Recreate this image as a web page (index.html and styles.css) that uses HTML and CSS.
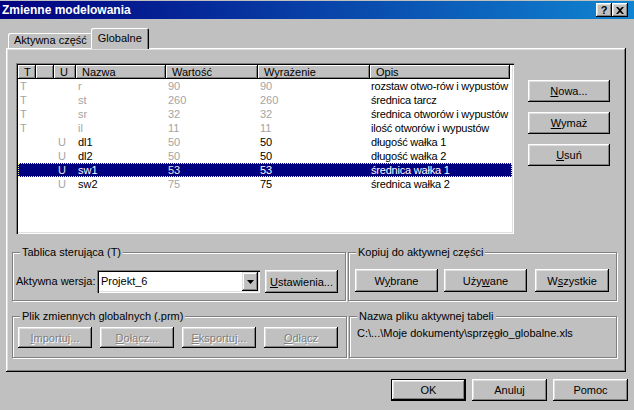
FILE: index.html
```html
<!DOCTYPE html>
<html lang="pl">
<head>
<meta charset="utf-8">
<title>Zmienne modelowania</title>
<link rel="stylesheet" href="styles.css">
</head>
<body>
<div class="window">
  <div class="titlebar">
    <span class="title">Zmienne modelowania</span>
    <div class="tb-buttons">
      <span class="tb-btn tb-help">?</span>
      <span class="tb-btn"><svg width="8" height="7" viewBox="0 0 8 7"><path d="M0 0h2l2 2 2-2h2L5 3.5 8 7H6L4 5 2 7H0l3-3.5z" fill="#000"/></svg></span>
    </div>
  </div>

  <div class="tabs">
    <div class="tab">Aktywna część</div>
    <div class="tab active">Globalne</div>
  </div>

  <div class="panel">
    <div class="top-row">
      <div class="list">
        <div class="list-head">
          <span class="hcell">T</span>
          <span class="hcell"></span>
          <span class="hcell">U</span>
          <span class="hcell">Nazwa</span>
          <span class="hcell">Wartość</span>
          <span class="hcell">Wyrażenie</span>
          <span class="hcell">Opis</span>
        </div>
        <div class="row"><span class="g">T</span><span></span><span class="u"></span><span class="g">r</span><span class="g">90</span><span class="g">90</span><span class="desc">rozstaw otwo-rów i wypustów</span></div>
        <div class="row"><span class="g">T</span><span></span><span class="u"></span><span class="g">st</span><span class="g">260</span><span class="g">260</span><span class="desc">średnica tarcz</span></div>
        <div class="row"><span class="g">T</span><span></span><span class="u"></span><span class="g">sr</span><span class="g">32</span><span class="g">32</span><span class="desc">średnica otworów i wypustów</span></div>
        <div class="row"><span class="g">T</span><span></span><span class="u"></span><span class="g">il</span><span class="g">11</span><span class="g">11</span><span class="desc">ilość otworów i wypustów</span></div>
        <div class="row"><span></span><span></span><span class="u g">U</span><span>dl1</span><span class="g">50</span><span>50</span><span class="desc">długość wałka 1</span></div>
        <div class="row"><span></span><span></span><span class="u g">U</span><span>dl2</span><span class="g">50</span><span>50</span><span class="desc">długość wałka 2</span></div>
        <div class="row sel"><span></span><span></span><span class="u g">U</span><span>sw1</span><span class="g">53</span><span>53</span><span class="desc">średnica wałka 1</span></div>
        <div class="row"><span></span><span></span><span class="u g">U</span><span>sw2</span><span class="g">75</span><span>75</span><span class="desc">średnica wałka 2</span></div>
      </div>
      <div class="side-buttons">
        <button class="btn side"><u>N</u>owa...</button>
        <button class="btn side"><u>W</u>ymaż</button>
        <button class="btn side"><u>U</u>suń</button>
      </div>
    </div>

    <div class="group-row first">
      <div class="group g1">
        <span class="legend">Tablica sterująca (T)</span>
        <span class="label">Aktywna wersja:</span>
        <div class="combo">
          <span class="combo-text">Projekt_6</span>
          <span class="dd"><svg width="7" height="4" viewBox="0 0 7 4"><path d="M0 0h7L3.5 4z" fill="#000"/></svg></span>
        </div>
        <button class="btn settings"><u>U</u>stawienia...</button>
      </div>
      <div class="group g2">
        <span class="legend">Kopiuj do aktywnej części</span>
        <button class="btn copy">W<u>y</u>brane</button>
        <button class="btn copy">Uży<u>w</u>ane</button>
        <button class="btn copy narrow">W<u>s</u>zystkie</button>
      </div>
    </div>

    <div class="group-row second">
      <div class="group g3">
        <span class="legend">Plik zmiennych globalnych (.prm)</span>
        <button class="btn file" disabled><u>I</u>mportuj...</button>
        <button class="btn file" disabled><u>D</u>ołącz...</button>
        <button class="btn file" disabled><u>E</u>ksportuj...</button>
        <button class="btn file" disabled><u>O</u>dłącz</button>
      </div>
      <div class="group g4">
        <span class="legend">Nazwa pliku aktywnej tabeli</span>
        <span class="path">C:\...\Moje dokumenty\sprzęgło_globalne.xls</span>
      </div>
    </div>
  </div>

  <div class="footer">
    <button class="btn dlg default">OK</button>
    <button class="btn dlg">Anuluj</button>
    <button class="btn dlg">Pomoc</button>
  </div>
</div>
</body>
</html>
```

FILE: styles.css
```css
* { box-sizing: border-box; }

body {
  margin: 0;
  width: 634px;
  height: 410px;
  overflow: hidden;
  background: #c0c0c0;
  font-family: "Liberation Sans", Arial, sans-serif;
  font-size: 11px;
  color: #000;
}

.window { width: 634px; }

/* title bar */
.titlebar {
  margin-top: 1px;
  height: 18px;
  background: linear-gradient(to right, #000080, #1084d0);
  display: flex;
  align-items: center;
  justify-content: space-between;
  padding: 0 6px 0 2px;
}
.title {
  color: #fff;
  font-weight: bold;
  font-size: 12px;
  line-height: 14px;
}
.tb-buttons { display: flex; }
.tb-btn {
  width: 16px;
  height: 14px;
  background: #c0c0c0;
  box-shadow: inset -1px -1px #000, inset 1px 1px #fff, inset -2px -2px #808080, inset 2px 2px #dfdfdf;
  display: flex;
  align-items: center;
  justify-content: center;
}
.tb-help {
  font-weight: bold;
  font-size: 11px;
  line-height: 12px;
}

/* tabs */
.tabs {
  margin: 9px 0 0 8px;
  height: 20px;
  display: flex;
  align-items: flex-end;
}
.tab {
  height: 15px;
  padding: 0 6px;
  line-height: 15px;
  background: #c0c0c0;
  border-radius: 2px 2px 0 0;
  box-shadow: inset 1px 1px #fff, inset -1px 0 #000, inset -2px 0 #808080;
  white-space: nowrap;
}
.tab.active {
  position: relative;
  z-index: 1;
  height: 21px;
  line-height: 20px;
  margin: 0 -2px -1px -2px;
  padding: 0 7px 0 7px;
}

/* panel */
.panel {
  margin-left: 6px;
  width: 620px;
  height: 324px;
  padding: 15px 0 0 6px;
  box-shadow: inset -1px -1px #000, inset 1px 1px #fff, inset -2px -2px #808080, inset 2px 2px #dfdfdf;
}

.top-row {
  display: flex;
  align-items: flex-start;
}

/* list view */
.list {
  margin-left: 4px;
  width: 498px;
  height: 171px;
  padding: 2px;
  background: #fff;
  box-shadow: inset 1px 1px #808080, inset 2px 2px #000, inset -1px -1px #fff, inset -2px -2px #dfdfdf;
}
.list-head,
.row {
  display: grid;
  grid-template-columns: 18px 18px 22px 90px 92px 112px 142px;
}
.list-head {
  height: 14px;
  grid-template-columns: 18px 18px 22px 90px 92px 112px 140px;
}
.hcell {
  background: #c0c0c0;
  box-shadow: inset -1px -1px #000, inset 1px 1px #fff, inset -2px -2px #808080;
  padding-left: 6px;
  line-height: 14px;
  white-space: nowrap;
  overflow: hidden;
}
.row {
  height: 14px;
  line-height: 14px;
}
.row > span {
  padding-left: 2px;
  white-space: nowrap;
  overflow: hidden;
}
.row > span.u { padding-left: 4px; }
.row > span.desc {
  padding-left: 1px;
  letter-spacing: -0.2px;
  overflow: visible;
}
.g { color: #a4a4a4; }
.row.sel {
  background: #000080;
  color: #fff;
  outline: 1px dotted #ffff80;
  outline-offset: -1px;
}
.row.sel .g { color: #e8e8e8; }

/* buttons */
.btn {
  font: inherit;
  font-size: 11px;
  color: #000;
  background: #c0c0c0;
  border: none;
  padding: 0;
  margin: 0;
  box-shadow: inset -1px -1px #000, inset 1px 1px #fff, inset -2px -2px #808080, inset 2px 2px #dfdfdf;
  white-space: nowrap;
}
.btn:disabled {
  color: #808080;
  text-shadow: 1px 1px #fff;
}
.side-buttons {
  margin: 17px 0 0 14px;
  display: flex;
  flex-direction: column;
  gap: 10px;
}
.btn.side { width: 82px; height: 22px; }

/* group boxes */
.group-row {
  display: flex;
  gap: 2px;
}
.group-row.first { margin-top: 18px; }
.group-row.second { margin-top: 15px; }

.group {
  position: relative;
  border: 1px solid #808080;
  box-shadow: inset 1px 1px #fff, 1px 1px #fff;
  display: flex;
  align-items: flex-start;
}
.legend {
  position: absolute;
  top: -7px;
  left: 7px;
  padding: 0 2px;
  line-height: 13px;
  background: #c0c0c0;
  white-space: nowrap;
}

.g1 {
  width: 334px;
  height: 49px;
  padding: 17px 0 0 3px;
}
.label {
  width: 81px;
  line-height: 23px;
  white-space: nowrap;
}
.combo {
  width: 163px;
  height: 23px;
  padding: 2px;
  background: #fff;
  box-shadow: inset 1px 1px #808080, inset 2px 2px #000, inset -1px -1px #fff, inset -2px -2px #dfdfdf;
  display: flex;
  align-items: center;
}
.combo-text {
  flex: 1;
  padding-left: 2px;
  line-height: 19px;
}
.dd {
  width: 16px;
  height: 19px;
  background: #c0c0c0;
  box-shadow: inset -1px -1px #000, inset 1px 1px #dfdfdf, inset -2px -2px #808080, inset 2px 2px #fff;
  display: flex;
  align-items: center;
  justify-content: center;
}
.btn.settings {
  margin-left: 5px;
  width: 73px;
  height: 23px;
}

.g2 {
  width: 269px;
  height: 49px;
  padding: 16px 0 0 6px;
  gap: 6px;
}
.btn.copy { width: 83px; height: 23px; }
.btn.copy.narrow { width: 74px; margin-left: 2px; }

.g3 {
  width: 335px;
  height: 42px;
  padding: 10px 0 0 5px;
  gap: 8px;
}
.btn.file { width: 74px; height: 21px; }

.g4 {
  width: 268px;
  height: 42px;
  padding: 10px 0 0 7px;
}
.path {
  line-height: 13px;
  white-space: nowrap;
}

/* footer */
.footer {
  margin-top: 7px;
  padding-right: 6px;
  display: flex;
  justify-content: flex-end;
  gap: 6px;
}
.btn.dlg { width: 75px; height: 22px; }
.btn.default {
  box-shadow: inset 0 0 0 1px #000, inset -2px -2px #000, inset 2px 2px #fff, inset -3px -3px #808080, inset 3px 3px #dfdfdf;
}
```
